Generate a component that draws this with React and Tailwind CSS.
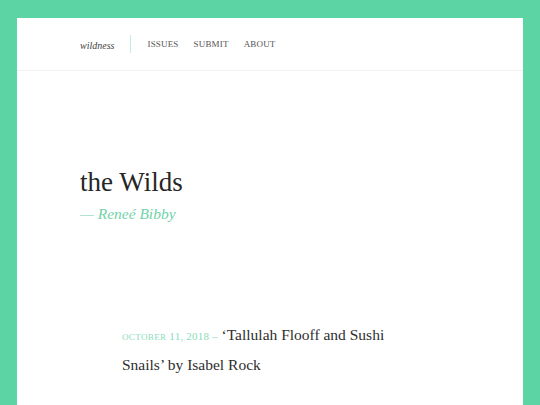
export default function App() {
  const serif = { fontFamily: '"Liberation Serif", "DejaVu Serif", serif' };
  return (
    <div className="min-h-[405px] w-[540px] bg-[#5dd4a3] px-[17px] pt-[18px]" style={serif}>
      <div className="min-h-[387px] bg-white">
        <header className="flex h-[53px] items-center border-b border-[#f1f3f2] pl-[63px]">
          <span className="mt-[2px] text-[10px] italic text-[#444]">wildness</span>
          <span className="mx-[16px] h-[18px] w-px bg-[#c4eedc]" />
          <nav className="mt-[2px] flex gap-[15px] text-[9px] tracking-[0.02em] text-[#555]">
            <span>ISSUES</span>
            <span>SUBMIT</span>
            <span>ABOUT</span>
          </nav>
        </header>
        <section className="pl-[63px] pt-[95px]">
          <h1 className="text-[27px] leading-[32px] text-[#262626]">the Wilds</h1>
          <p className="mt-[6px] text-[15.5px] italic leading-[20px] text-[#6fd3a9]">— Reneé Bibby</p>
        </section>
        <section className="pl-[105px] pt-[97px]">
          <p className="w-[300px] text-[15.5px] leading-[28px] text-[#2e2e2e]">
            <span className="text-[#8adcba]">
              <span className="text-[9px] tracking-[0.04em]">OCTOBER</span>
              <span className="text-[11px] tracking-[0.02em]"> 11, 2018 </span>
              <span className="text-[11px]">–</span>
            </span>{' '}
            ‘Tallulah Flooff and Sushi
            <br />
            Snails’ by Isabel Rock
          </p>
        </section>
      </div>
    </div>
  );
}
